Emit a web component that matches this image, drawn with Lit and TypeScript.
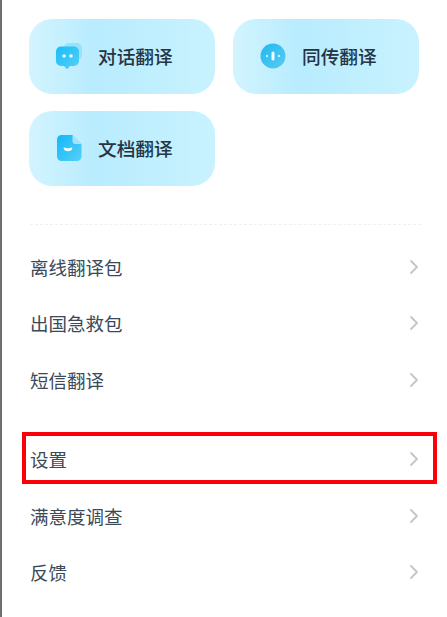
import { LitElement, html, css, svg } from "lit";
import { customElement } from "lit/decorators.js";

const chatIcon = svg`<svg class="ico" viewBox="0 0 28 28" width="28" height="28">
  <defs><linearGradient id="g1" x1="0" y1="0" x2="1" y2="1"><stop offset="0" stop-color="#18bdf9"/><stop offset="1" stop-color="#56cff8"/></linearGradient></defs>
  <rect x="9" y="1" width="18" height="17" rx="5" fill="#97e2fc"/>
  <path d="M6 4.500h13a5 5 0 0 1 5 5v9.500a5 5 0 0 1-5 5h-4l-2 2.200a1.200 1.200 0 0 1-1.900 0l-2-2.200H6a5 5 0 0 1-5-5V9.500a5 5 0 0 1 5-5z" fill="url(#g1)"/>
  <circle cx="9" cy="14" r="1.800" fill="#e8f9ff"/><circle cx="16" cy="14" r="1.800" fill="#e8f9ff"/>
</svg>`;

const voiceIcon = svg`<svg class="ico" viewBox="0 0 28 28" width="28" height="28">
  <defs><linearGradient id="g2" x1="0" y1="0" x2="1" y2="1"><stop offset="0" stop-color="#1fb9f0"/><stop offset="1" stop-color="#5accf0"/></linearGradient></defs>
  <circle cx="14" cy="14" r="12.500" fill="url(#g2)"/>
  <rect x="12.500" y="9.500" width="3" height="9" rx="1.500" fill="#eefbff"/>
  <circle cx="8" cy="14" r="1.100" fill="#eefbff"/><circle cx="20" cy="14" r="1.100" fill="#eefbff"/>
</svg>`;

const docIcon = svg`<svg class="ico" viewBox="0 0 28 28" width="28" height="28">
  <defs><linearGradient id="g3" x1="0" y1="0" x2="1" y2="1"><stop offset="0" stop-color="#12b8f8"/><stop offset="1" stop-color="#58cff8"/></linearGradient></defs>
  <path d="M6.500 1h11l9 9v12.500a4.500 4.500 0 0 1-4.500 4.500H6.500A4.500 4.500 0 0 1 2 22.500v-17A4.500 4.500 0 0 1 6.500 1z" fill="url(#g3)"/>
  <path d="M17.500 1l9 9h-6a3 3 0 0 1-3-3z" fill="#a5e5fb"/>
  <path d="M9.500 13.500c1.600 1.100 5.400 1.100 7 0 .8 0 1 .6.800 1.300-.6 1.700-2.300 2.500-4.300 2.500s-3.700-.8-4.300-2.500c-.2-.7 0-1.300.8-1.300z" fill="#eefbff"/>
</svg>`;

const chevron = html`<svg class="chev" viewBox="0 0 10 16" width="10" height="16"><path d="M2 2l6 6-6 6" fill="none" stroke="#c0c7cf" stroke-width="1.800" stroke-linecap="round" stroke-linejoin="round"/></svg>`;

@customElement("app-root")
export class AppRoot extends LitElement {
  static styles = css`
    :host {
      display: block;
      width: 447px;
      height: 617px;
      box-sizing: border-box;
      overflow: hidden;
      background: #fff;
      border-left: 2px solid #6b7074;
      font-family: "Noto Sans CJK SC", "Noto Sans", sans-serif;
      color: #2b3a48;
    }
    .grid {
      display: grid;
      grid-template-columns: 186px 186px;
      column-gap: 18px;
      row-gap: 17px;
      padding: 19px 0 0 27px;
    }
    .card {
      height: 75px;
      border-radius: 23px;
      background: linear-gradient(90deg, #d3f4ff 0%, #b8ecfe 35%, #c9f2ff 100%);
      display: flex;
      align-items: center;
      padding: 0 0 2px 26px;
      gap: 15px;
      font-size: 18.700px;
      font-weight: 500;
      color: #243444;
      box-sizing: border-box;
    }
    .ico { flex: none; }
    .divider {
      margin: 38px 26px 0 28px;
      border-top: 1px dashed #eef0f2;
    }
    .list { margin-top: 13.500px; }
    .group { padding: 0 28px 0 28px; }
    .group + .group { margin-top: 22.400px; }
    .row {
      position: relative;
      height: 56.600px;
      display: flex;
      align-items: center;
      justify-content: space-between;
      font-size: 18.500px;
      color: #3a4a58;
    }
    .mark {
      position: absolute;
      left: -8px;
      right: -18px;
      top: 1.500px;
      bottom: 3px;
      border: 4px solid #fa0008;
      pointer-events: none;
    }
  `;

  private row(label: string, marked = false) {
    return html`<div class="row"><span>${label}</span>${chevron}${marked ? html`<div class="mark"></div>` : ""}</div>`;
  }

  render() {
    return html`
      <div class="grid">
        <div class="card">${chatIcon}<span>对话翻译</span></div>
        <div class="card">${voiceIcon}<span>同传翻译</span></div>
        <div class="card">${docIcon}<span>文档翻译</span></div>
      </div>
      <div class="divider"></div>
      <div class="list">
        <div class="group">
          ${this.row("离线翻译包")}
          ${this.row("出国急救包")}
          ${this.row("短信翻译")}
        </div>
        <div class="group">
          ${this.row("设置", true)}
          ${this.row("满意度调查")}
          ${this.row("反馈")}
        </div>
      </div>
    `;
  }
}
